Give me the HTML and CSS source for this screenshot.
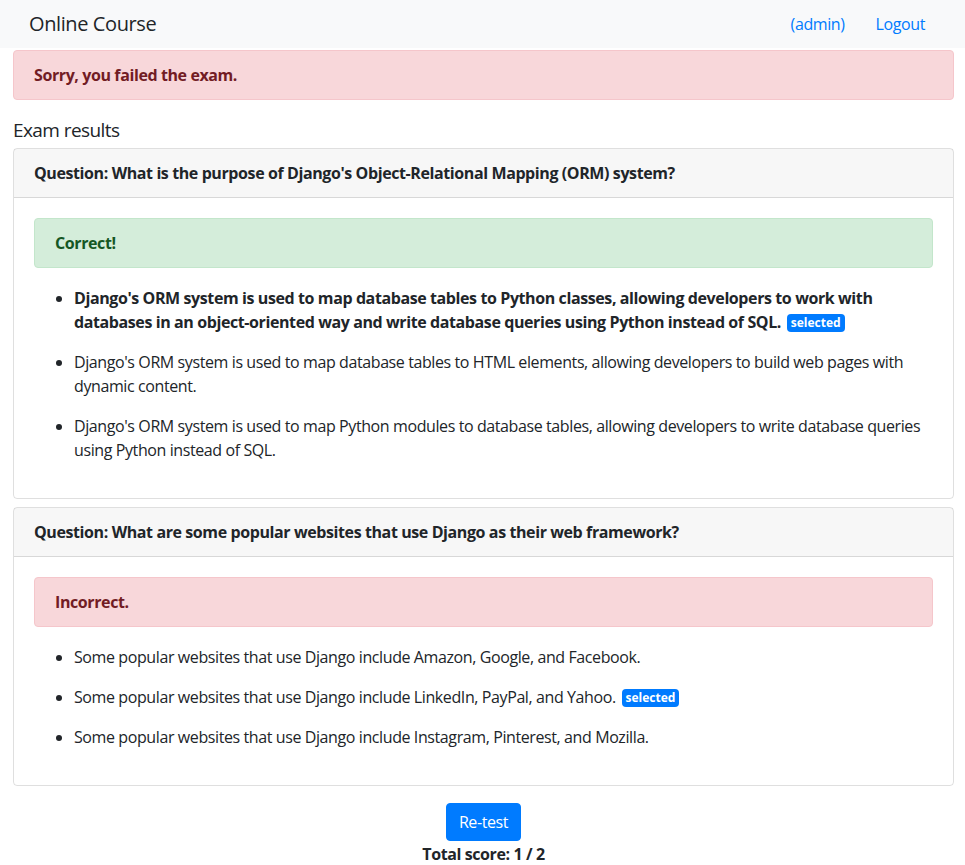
FILE: index.html
```html
<!DOCTYPE html>
<html lang="en">
<head>
<meta charset="utf-8">
<title>Online Course</title>
<link rel="stylesheet" href="styles.css">
</head>
<body>
<nav class="navbar">
  <span class="brand">Online Course</span>
  <div class="nav-links">
    <a class="nav-link" href="#">(admin)</a>
    <a class="nav-link" href="#">Logout</a>
  </div>
</nav>
<main class="container">
  <div class="alert alert-danger"><b>Sorry, you failed the exam.</b></div>
  <h5 class="title">Exam results</h5>

  <div class="card">
    <div class="card-header"><b>Question: What is the purpose of Django's Object-Relational Mapping (ORM) system?</b></div>
    <div class="card-body">
      <div class="alert alert-success"><b>Correct!</b></div>
      <ul class="choices">
        <li><b>Django's ORM system is used to map database tables to Python classes, allowing developers to work with databases in an object-oriented way and write database queries using Python instead of SQL.</b> <span class="badge">selected</span></li>
        <li>Django's ORM system is used to map database tables to HTML elements, allowing developers to build web pages with dynamic content.</li>
        <li>Django's ORM system is used to map Python modules to database tables, allowing developers to write database queries using Python instead of SQL.</li>
      </ul>
    </div>
  </div>

  <div class="card">
    <div class="card-header"><b>Question: What are some popular websites that use Django as their web framework?</b></div>
    <div class="card-body">
      <div class="alert alert-danger"><b>Incorrect.</b></div>
      <ul class="choices">
        <li>Some popular websites that use Django include Amazon, Google, and Facebook.</li>
        <li>Some popular websites that use Django include LinkedIn, PayPal, and Yahoo. <span class="badge">selected</span></li>
        <li>Some popular websites that use Django include Instagram, Pinterest, and Mozilla.</li>
      </ul>
    </div>
  </div>

  <div class="footer">
    <button class="btn" type="button">Re-test</button>
    <b class="score">Total score: 1 / 2</b>
  </div>
</main>
</body>
</html>
```

FILE: styles.css
```css
* { box-sizing: border-box; }
html, body { margin: 0; padding: 0; }
body {
  font-family: "Open Sans", "Noto Sans", sans-serif;
  font-size: 16px;
  line-height: 24px;
  letter-spacing: -0.025em;
  color: #212529;
  background: #fff;
}
b { font-weight: 700; }

.navbar {
  display: flex;
  align-items: center;
  justify-content: space-between;
  height: 48px;
  background: #f8f9fa;
  padding: 0 32px 0 29px;
}
.brand { font-size: 20px; line-height: 30px; }
.nav-links { display: flex; gap: 15px; }
.nav-link { color: #007bff; text-decoration: none; padding: 0 8px; }

.container { padding: 2px 11px 0 13px; }

.alert {
  border: 1px solid transparent;
  border-radius: 4px;
  padding: 12px 20px;
  margin-bottom: 16px;
}
.alert-danger { background: #f8d7da; border-color: #f5c6cb; color: #721c24; }
.alert-success { background: #d4edda; border-color: #c3e6cb; color: #155724; }

.title {
  font-size: 19px;
  font-weight: 400;
  line-height: 24px;
  letter-spacing: -0.03em;
  margin: 18px 0 6px;
}
.container > .alert:first-child { margin-bottom: 0; }

.card {
  border: 1px solid rgba(0,0,0,.125);
  border-radius: 4px;
  margin-bottom: 8px;
}
.card-header {
  background: rgba(0,0,0,.03);
  border-bottom: 1px solid rgba(0,0,0,.125);
  padding: 12px 20px;
}
.card-body { padding: 20px 20px 20px; }
.card-body .alert { margin-bottom: 18px; }

.choices { margin: 0; padding-left: 40px; }
.choices li { margin-bottom: 16px; }

.badge {
  display: inline-block;
  background: #007bff;
  color: #fff;
  font-size: 12px;
  font-weight: 700;
  line-height: 1;
  letter-spacing: 0;
  padding: 3px 4px 3px;
  margin-left: 2px;
  border-radius: 4px;
  vertical-align: 1px;
}

.footer {
  display: flex;
  flex-direction: column;
  align-items: center;
  padding-top: 9px;
}
.btn {
  font-family: inherit;
  font-size: 16px;
  line-height: 24px;
  letter-spacing: inherit;
  color: #fff;
  background: #007bff;
  border: 1px solid #007bff;
  border-radius: 4px;
  padding: 6px 12px;
}
.score { line-height: 26px; }
```
